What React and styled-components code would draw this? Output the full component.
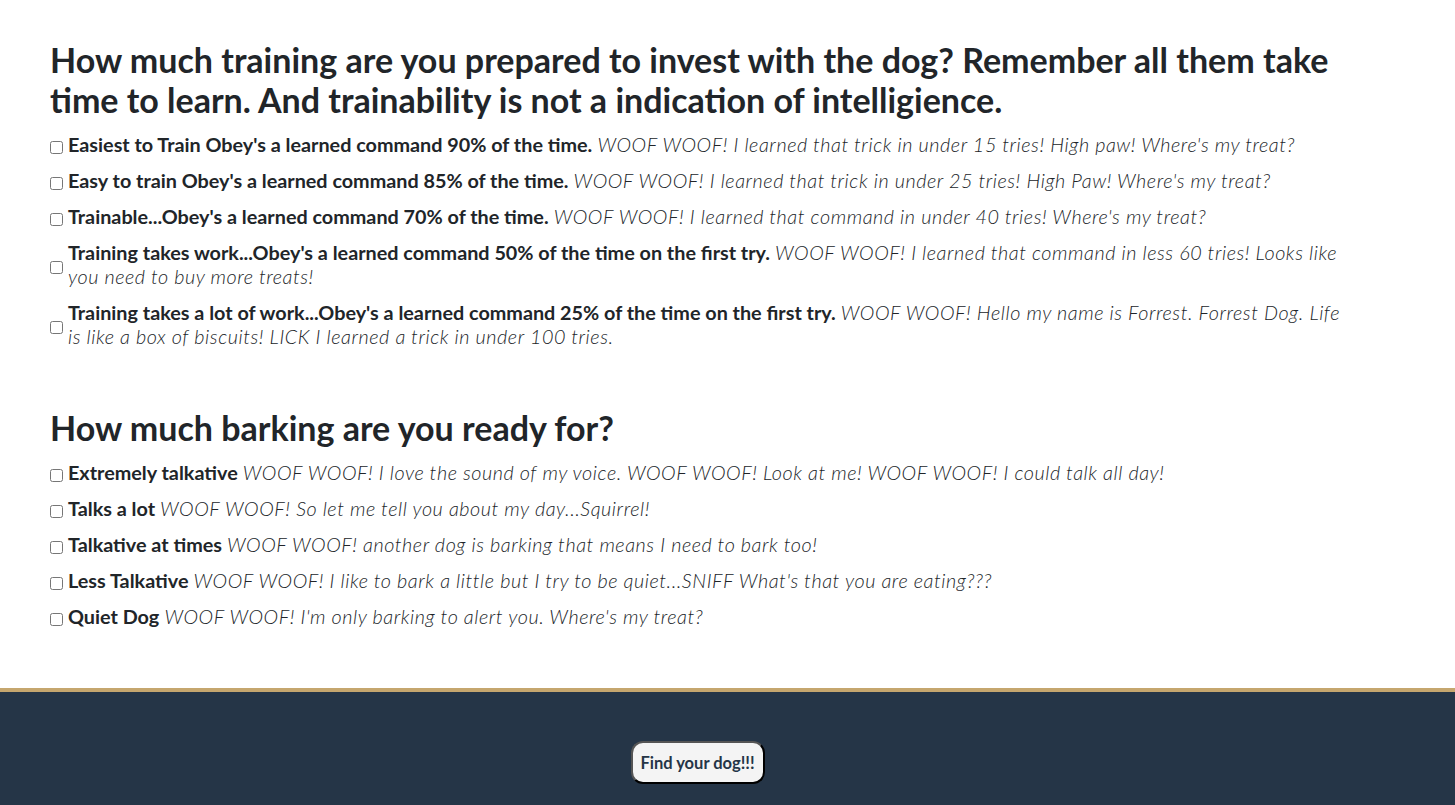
import React from 'react';
import styled, { createGlobalStyle } from 'styled-components';

const GlobalStyle = createGlobalStyle`
  html, body {
    margin: 0;
    padding: 0;
    background: #ffffff;
    font-family: Lato, "Open Sans", sans-serif;
    color: #212529;
  }
`;

const Page = styled.div`
  display: flex;
  flex-direction: column;
  min-height: 805px;
`;

const Main = styled.main`
  width: 1305px;
  padding: 40px 0 48px 50px;
`;

const Section = styled.section`
  & + & {
    margin-top: 60px;
  }
`;

const Question = styled.h2`
  margin: 0 0 12px;
  font-size: 34px;
  line-height: 40px;
  font-weight: 700;
  color: #212529;
`;

const Option = styled.label`
  display: flex;
  align-items: center;
  margin-bottom: 12px;
  font-size: 19.8px;
  line-height: 24px;
`;

const Box = styled.input.attrs({ type: 'checkbox' })`
  flex: none;
  width: 13px;
  height: 13px;
  margin: 6px 5px 0 0;
`;

const Text = styled.span`
  display: block;
`;

const Title = styled.strong`
  font-weight: 700;
`;

const Woof = styled.em`
  font-style: italic;
  font-weight: 300;
  letter-spacing: 0.55px;
`;

const Footer = styled.footer`
  margin-top: auto;
  border-top: 4px solid #c5a66e;
  background: #253547;
  height: 117px;
  display: flex;
  justify-content: center;
  align-items: flex-start;
  padding: 49px 60px 0 0;
  box-sizing: border-box;
`;

const FindButton = styled.button`
  font-family: Lato, sans-serif;
  font-weight: 700;
  font-size: 16.5px;
  color: #253547;
  background: #f4f4f4;
  border: 2px outset #555555;
  border-radius: 12px;
  padding: 0 6px;
  height: 43px;
  width: 134px;
  cursor: pointer;
`;

const training = [
  ["Easiest to Train Obey's a learned command 90% of the time.", 'WOOF WOOF! I learned that trick in under 15 tries! High paw! Where\'s my treat?'],
  ["Easy to train Obey's a learned command 85% of the time.", "WOOF WOOF! I learned that trick in under 25 tries! High Paw! Where's my treat?"],
  ["Trainable...Obey's a learned command 70% of the time.", "WOOF WOOF! I learned that command in under 40 tries! Where's my treat?"],
  ["Training takes work...Obey's a learned command 50% of the time on the first try.", 'WOOF WOOF! I learned that command in less 60 tries! Looks like you need to buy more treats!'],
  ["Training takes a lot of work...Obey's a learned command 25% of the time on the first try.", 'WOOF WOOF! Hello my name is Forrest. Forrest Dog. Life is like a box of biscuits! LICK I learned a trick in under 100 tries.'],
];

const barking = [
  ['Extremely talkative', 'WOOF WOOF! I love the sound of my voice. WOOF WOOF! Look at me! WOOF WOOF! I could talk all day!'],
  ['Talks a lot', 'WOOF WOOF! So let me tell you about my day...Squirrel!'],
  ['Talkative at times', 'WOOF WOOF! another dog is barking that means I need to bark too!'],
  ['Less Talkative', "WOOF WOOF! I like to bark a little but I try to be quiet...SNIFF What's that you are eating???"],
  ['Quiet Dog', "WOOF WOOF! I'm only barking to alert you. Where's my treat?"],
];

function Options({ items }) {
  return items.map(([title, woof]) => (
    <Option key={title}>
      <Box />
      <Text>
        <Title>{title}</Title> <Woof>{woof}</Woof>
      </Text>
    </Option>
  ));
}

export default function App() {
  return (
    <Page>
      <GlobalStyle />
      <Main>
        <Section>
          <Question>
            How much training are you prepared to invest with the dog? Remember all them take time to learn. And trainability is not a indication of intelligience.
          </Question>
          <Options items={training} />
        </Section>
        <Section>
          <Question>How much barking are you ready for?</Question>
          <Options items={barking} />
        </Section>
      </Main>
      <Footer>
        <FindButton>Find your dog!!!</FindButton>
      </Footer>
    </Page>
  );
}
